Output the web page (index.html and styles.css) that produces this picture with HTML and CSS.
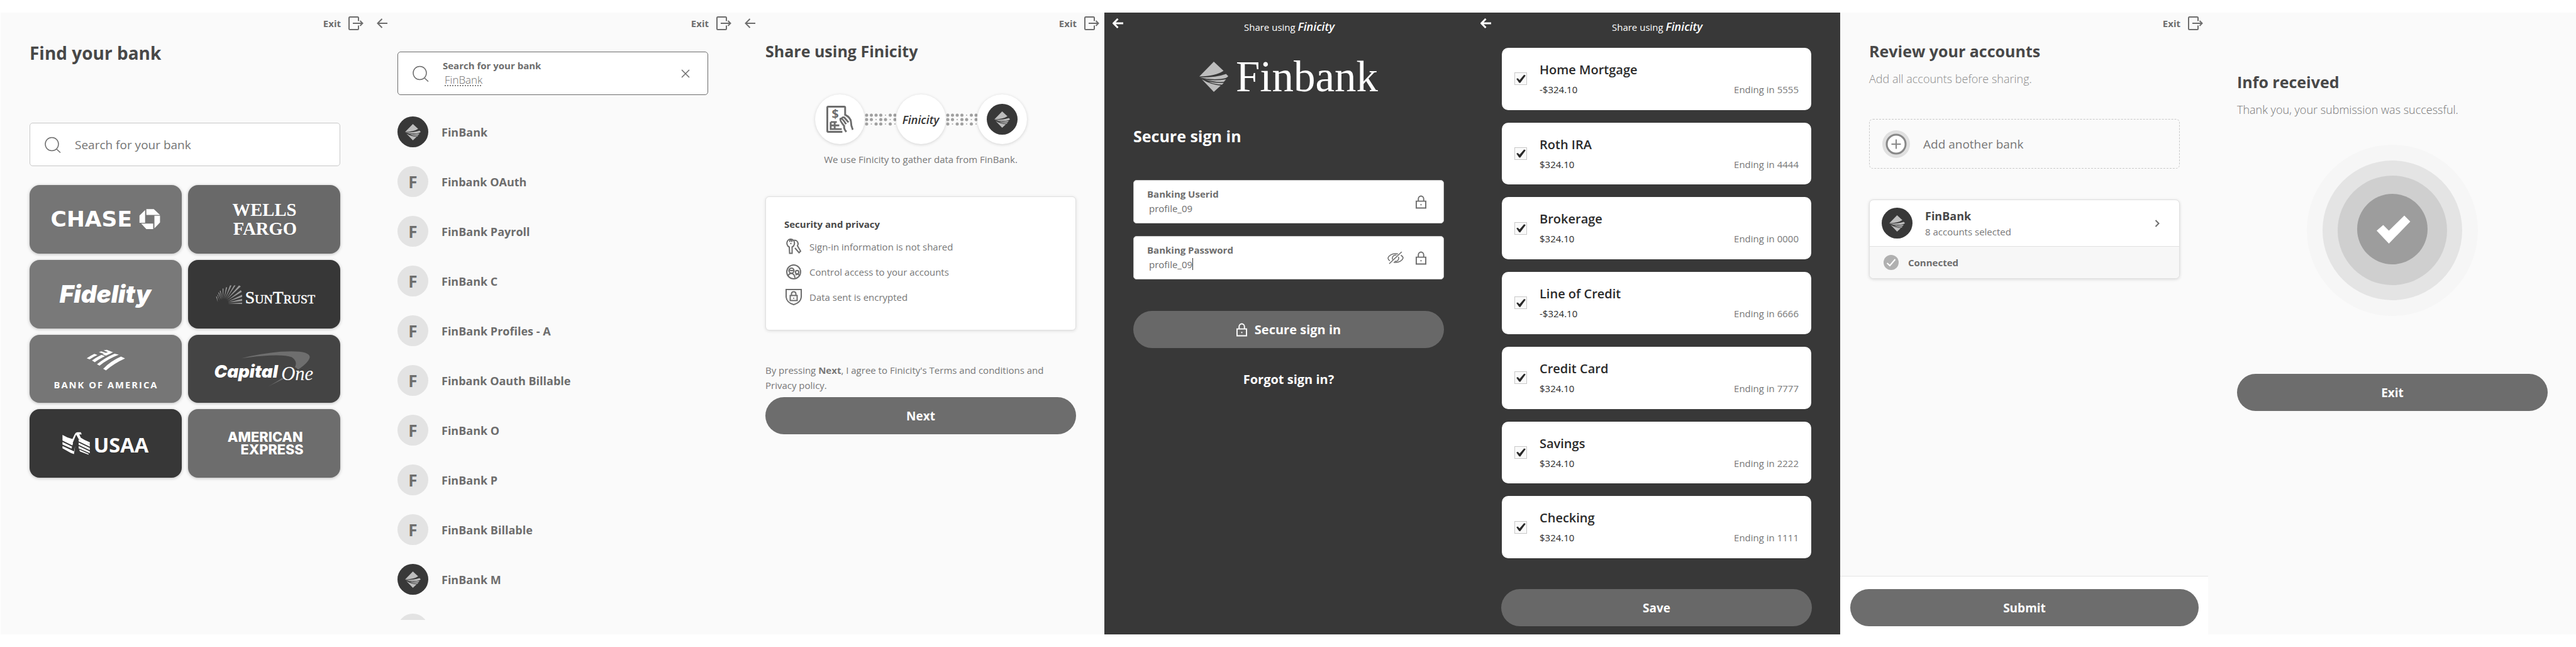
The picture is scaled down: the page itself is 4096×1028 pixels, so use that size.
FILE: index.html
```html
<!DOCTYPE html>
<html lang="en">
<head>
<meta charset="utf-8">
<title>Finicity Connect flow</title>
<link rel="stylesheet" href="styles.css">
</head>
<body>
<svg class="sprite" aria-hidden="true">
  <symbol id="i-exit" viewBox="0 0 24 22"><path d="M16 7.5v-5A1.5 1.5 0 0 0 14.500 1h-12A1.500 1.500 0 0 0 1 2.500v17A1.500 1.500 0 0 0 2.500 21h12a1.500 1.500 0 0 0 1.500-1.500v-5M7 11h15M18.500 7l4 4-4 4"/></symbol>
  <symbol id="i-back" viewBox="0 0 18 16"><path d="M17 8H1.500M8.500 1L1.500 8l7 7"/></symbol>
  <symbol id="i-search" viewBox="0 0 26 26"><circle cx="11.500" cy="12" r="10.500"/><path d="M19 20l6 5.500"/></symbol>
  <symbol id="i-close" viewBox="0 0 14 14"><path d="M1 1l12 12M13 1L1 13"/></symbol>
  <symbol id="i-lock" viewBox="0 0 18 22"><path d="M1 9.500h16v11.500H1zM4.500 9.500V6a4.500 5 0 0 1 9 0v3.500M9 14.500v2"/></symbol>
  <symbol id="i-eye" viewBox="0 0 26 20"><path d="M4 14.500C2 13 1 11 1 10c1-3.500 6-7 12-7 1.500 0 3 .2 4 .6M21.500 5.500C24 7 25 9 25 10c-1 3.500-6 7-12 7-1 0-2-.1-3-.3M8.500 12.500a5 5 0 0 1 6-7M17.500 8a5 5 0 0 1-6 7M23 0L3 19M11 11l4-3"/></symbol>
  <symbol id="i-chevron" viewBox="0 0 8 12"><path d="M1.500 1l5 5-5 5"/></symbol>
  <symbol id="i-diamond" viewBox="0 0 46 48"><path d="M23 0l15.500 14.500Q26 23 0 23.500zM1 25Q28 25 42.500 19.500L46 23Q44 26.500 34 27.500 16 29 1 25zM8 28Q24 31 42.500 28L39 32Q24 33 8 28zM14 31.500Q28 34.500 39 33.500L36 36.500Q24 36 14 31.500zM4 28Q17 36 34 38L23 48z"/></symbol>
</svg>

<main class="flow">

  <section class="screen">
    <header class="topbar"><button class="exit" type="button">Exit<svg class="exit-icon"><use href="#i-exit"/></svg></button></header>
    <div class="content">
      <h1 class="title title-large">Find your bank</h1>
      <label class="search search-empty">
        <svg class="search-icon"><use href="#i-search"/></svg>
        <input class="search-input" type="text" placeholder="Search for your bank" aria-label="Search for your bank">
      </label>
      <div class="tiles">
        <button class="tile tone-a" type="button" aria-label="Chase"><svg viewBox="0 0 245 110">
          <text class="logo-chase" x="34" y="67">CHASE</text>
          <path d="M188 38.700h12L210 48h-22zM201 49.300h9v11l-9 9.400zM179.700 62H199v9h-11zM177 49l9-8.700v20.400h-9z"/></svg></button>
        <button class="tile tone-b" type="button" aria-label="Wells Fargo"><svg viewBox="0 0 245 110">
          <text class="logo-wells" x="123" y="50">WELLS</text><text class="logo-wells" x="124" y="80">FARGO</text></svg></button>
        <button class="tile tone-c" type="button" aria-label="Fidelity"><svg viewBox="0 0 245 110">
          <text class="logo-fidelity" x="122" y="69">Fidelity</text></svg></button>
        <button class="tile tone-d" type="button" aria-label="SunTrust"><svg viewBox="0 0 245 110">
          <g class="rays"><path d="M64 70l23-1.500v2.500zM64 68.500l23-6v3.500zM64 67l23-11v3.500zM63 65.500L85 48.500l1.500 3zM62 64l20-23 3 1.500zM61 63.500l13-22.500 2.500 0zM59.500 63l8-22h2.500zM58 63l3-19h2zM56.500 63l-1-17h1.500zM55 63.500l-4-14h1.500zM53.500 64.500l-5-12h1.500zM51 66l-4-10h1zM48 68l-3-9h1.500z"/></g>
          <text class="logo-suntrust" x="92" y="70"><tspan class="caps">S</tspan>UN<tspan class="caps">T</tspan>RUST</text></svg></button>
        <button class="tile tone-e" type="button" aria-label="Bank of America"><svg viewBox="0 0 245 110">
          <path d="M118.500 54.600Q131 42 147.200 35l6.500 3Q136 46 123 57.300zM108.500 47.300Q121 37 136.800 30.300l6.900 1.700Q126 39 112.700 49.600zM100.500 41.300Q110 34 126 27.800l6 1.500Q116 36 105 44zM92 37.600Q98 33.500 104.300 30.600l5 1.700Q103 35 96.700 39.600zM119.200 25l5-1 10.300 4-4 1.500zM111.600 27.800l4-1.300 10 3.500-3.500 1.500z"/>
          <path class="tone-e-line" d="M108 28.500l16 6"/>
          <text class="logo-boa" x="123" y="86">BANK OF AMERICA</text></svg></button>
        <button class="tile tone-f" type="button" aria-label="Capital One"><svg viewBox="0 0 245 110">
          <path class="swoosh" d="M86 37.700Q118 30 149 27.200 196 24 196 36 194 45 177 56 175 53 172 52 177 43 167 36 150 29 86 37.700zM151 69.500Q142 76 128 83.500 142 77 154 71z"/>
          <text class="logo-capital" x="42" y="69">Capital</text><text class="logo-one" x="150" y="73">One</text></svg></button>
        <button class="tile tone-g" type="button" aria-label="USAA"><svg viewBox="0 0 245 110">
          <path d="M53 41.500q8 5 16 6.500l4-8q1.500-3 4.500-2.700h5l1.500 3.500h-4l2.500 5.200q6 4 14.500 7.500v3q-11-4-18-8.500l-4-7-7 17-15-7.500zM53 47l17 8-1 3.500-16-8zM53 53l15.500 7.500-1 3L53 57zM53 59.500l14.500 6.500 4 2 2-9-2 13.500-5-2L53 63zM79 48.500L97 57v3.500L79 52zM79 54l18 8.500V66l-18-8.500zM79 59.500L97 68v3l-18-8zM80 65l15 7v1.500L81 68z"/>
          <text class="logo-usaa" x="103" y="70">USAA</text></svg></button>
        <button class="tile tone-h" type="button" aria-label="American Express"><svg viewBox="0 0 245 110">
          <text class="logo-amex" x="185" y="53">AMERICAN</text><text class="logo-amex" x="186" y="73">EXPRESS</text></svg></button>
      </div>
    </div>
  </section>

  <section class="screen">
    <header class="topbar"><button class="back" type="button" aria-label="Back"><svg><use href="#i-back"/></svg></button><button class="exit" type="button">Exit<svg class="exit-icon"><use href="#i-exit"/></svg></button></header>
    <div class="content content-list">
      <div class="search search-filled">
        <svg class="search-icon"><use href="#i-search"/></svg>
        <div class="field-text">
          <label class="field-label" for="bank-query">Search for your bank</label>
          <input class="field-value misspelt" id="bank-query" type="text" value="FinBank">
        </div>
        <button class="clear" type="button" aria-label="Clear"><svg><use href="#i-close"/></svg></button>
      </div>
      <ul class="banks">
        <li class="bank"><span class="avatar avatar-dark"><svg><use href="#i-diamond"/></svg></span>FinBank</li>
        <li class="bank"><span class="avatar">F</span>Finbank OAuth</li>
        <li class="bank"><span class="avatar">F</span>FinBank Payroll</li>
        <li class="bank"><span class="avatar">F</span>FinBank C</li>
        <li class="bank"><span class="avatar">F</span>FinBank Profiles - A</li>
        <li class="bank"><span class="avatar">F</span>Finbank Oauth Billable</li>
        <li class="bank"><span class="avatar">F</span>FinBank O</li>
        <li class="bank"><span class="avatar">F</span>FinBank P</li>
        <li class="bank"><span class="avatar">F</span>FinBank Billable</li>
        <li class="bank"><span class="avatar avatar-dark"><svg><use href="#i-diamond"/></svg></span>FinBank M</li>
        <li class="bank"><span class="avatar"></span></li>
      </ul>
    </div>
  </section>

  <section class="screen">
    <header class="topbar"><button class="back" type="button" aria-label="Back"><svg><use href="#i-back"/></svg></button><button class="exit" type="button">Exit<svg class="exit-icon"><use href="#i-exit"/></svg></button></header>
    <div class="content">
      <h1 class="title">Share using Finicity</h1>
      <div class="link-row">
        <span class="disc"><svg class="pay-icon" viewBox="0 0 44 44"><path d="M26 42.500H3Q1.500 42.500 1.500 41V3Q1.500 1.500 3 1.500h26Q30.500 1.500 30.500 3v13M7 26.500h10M7 26.500V38h18M7 32h14M13.500 26.500V38M31 15q8 4 9 11 0 7 3 13M32.500 42.500Q28 37 29 33q-8-10-6-12 3-1 9 9M25 22q0-4 4-3l7 8"/><text x="14.500" y="20">$</text></svg></span>
        <svg class="dots" viewBox="0 0 50 20"><g><circle cx="3" cy="3" r="2.500"/><circle cx="10.500" cy="3" r="2.500"/><circle cx="18" cy="3" r="2.500"/><circle cx="25.500" cy="3" r="2.500"/><circle cx="33" cy="3" r="1"/><circle cx="40.500" cy="3" r="2.500"/><circle cx="48" cy="3" r="2.500"/><circle cx="3" cy="10" r="2.500"/><circle cx="10.500" cy="10" r="2.500"/><circle cx="18" cy="10" r="1"/><circle cx="25.500" cy="10" r="2.500"/><circle cx="33" cy="10" r="2.500"/><circle cx="40.500" cy="10" r="1"/><circle cx="48" cy="10" r="2.500"/><circle cx="3" cy="17" r="2.500"/><circle cx="10.500" cy="17" r="1"/><circle cx="18" cy="17" r="2.500"/><circle cx="25.500" cy="17" r="2.500"/><circle cx="33" cy="17" r="1"/><circle cx="40.500" cy="17" r="2.500"/><circle cx="48" cy="17" r="1"/></g></svg>
        <span class="disc finicity">Finicity</span>
        <svg class="dots" viewBox="0 0 50 20"><g><circle cx="3" cy="3" r="2.500"/><circle cx="10.500" cy="3" r="2.500"/><circle cx="18" cy="3" r="2.500"/><circle cx="25.500" cy="3" r="2.500"/><circle cx="33" cy="3" r="1"/><circle cx="40.500" cy="3" r="2.500"/><circle cx="48" cy="3" r="2.500"/><circle cx="3" cy="10" r="2.500"/><circle cx="10.500" cy="10" r="2.500"/><circle cx="18" cy="10" r="1"/><circle cx="25.500" cy="10" r="2.500"/><circle cx="33" cy="10" r="2.500"/><circle cx="40.500" cy="10" r="1"/><circle cx="48" cy="10" r="2.500"/><circle cx="3" cy="17" r="2.500"/><circle cx="10.500" cy="17" r="1"/><circle cx="18" cy="17" r="2.500"/><circle cx="25.500" cy="17" r="2.500"/><circle cx="33" cy="17" r="1"/><circle cx="40.500" cy="17" r="2.500"/><circle cx="48" cy="17" r="1"/></g></svg>
        <span class="disc"><span class="avatar avatar-dark"><svg><use href="#i-diamond"/></svg></span></span>
      </div>
      <p class="link-note">We use Finicity to gather data from FinBank.</p>
      <div class="privacy">
        <h2 class="privacy-title">Security and privacy</h2>
        <ul class="privacy-list">
          <li><svg viewBox="0 0 26 26"><path d="M6 13.500A6 6.500 0 1 1 10.500 13.500V23.500h-4zM8.500 7v2M7 5.500V3.500q1.500-3 3 0v2M12 3q7-1.500 8 5 0 2-1 3.500l5 8.500-2.500 2.500L15 15"/></svg>Sign-in information is not shared</li>
          <li><svg viewBox="0 0 26 26"><circle cx="13" cy="13" r="11"/><circle cx="9.500" cy="11" r="4"/><path d="M5.500 10q5 2 8 0M4 20q1-4.500 5.500-4.500T15 22.500M16 18q4-3 6.500 1"/><circle cx="18.500" cy="13.500" r="2.700"/></svg>Control access to your accounts</li>
          <li><svg viewBox="0 0 26 26"><path d="M1 1h24v12q-1 9-12 12Q2 22 1 13zM7.500 10.500h11v8h-11zM9.500 10.500V8q0-3.500 3.500-3.500T16.500 8v2.500M13 14v1.500"/></svg>Data sent is encrypted</li>
        </ul>
      </div>
      <p class="agreement">By pressing <strong>Next</strong>, I agree to Finicity's Terms and conditions and Privacy policy.</p>
      <button class="pill pill-next" type="button">Next</button>
    </div>
  </section>

  <section class="screen dark">
    <header class="topbar"><button class="back" type="button" aria-label="Back"><svg><use href="#i-back"/></svg></button><p class="brandline">Share using <span class="finicity">Finicity</span></p></header>
    <div class="content">
      <div class="finbank"><svg><use href="#i-diamond"/></svg><span>Finbank</span></div>
      <h1 class="title title-small">Secure sign in</h1>
      <div class="fields">
        <div class="field">
          <div class="field-text">
            <label class="field-label" for="userid">Banking Userid</label>
            <input class="field-value" id="userid" type="text" value="profile_09">
          </div>
          <svg class="lock"><use href="#i-lock"/></svg>
        </div>
        <div class="field">
          <div class="field-text">
            <label class="field-label" for="password">Banking Password</label>
            <div class="caret-row"><input class="field-value sized" id="password" type="text" value="profile_09"><span class="caret"></span></div>
          </div>
          <svg class="eye"><use href="#i-eye"/></svg>
          <svg class="lock"><use href="#i-lock"/></svg>
        </div>
      </div>
      <button class="pill pill-signin" type="button"><svg class="lock"><use href="#i-lock"/></svg>Secure sign in</button>
      <a class="forgot" href="#">Forgot sign in?</a>
    </div>
  </section>

  <section class="screen dark">
    <header class="topbar"><button class="back" type="button" aria-label="Back"><svg><use href="#i-back"/></svg></button><p class="brandline">Share using <span class="finicity">Finicity</span></p></header>
    <div class="content">
      <div class="accounts">
        <label class="account"><input type="checkbox" checked><span class="account-text"><b>Home Mortgage</b><span class="account-line"><span>-$324.10</span><span class="ending">Ending in 5555</span></span></span></label>
        <label class="account"><input type="checkbox" checked><span class="account-text"><b>Roth IRA</b><span class="account-line"><span>$324.10</span><span class="ending">Ending in 4444</span></span></span></label>
        <label class="account"><input type="checkbox" checked><span class="account-text"><b>Brokerage</b><span class="account-line"><span>$324.10</span><span class="ending">Ending in 0000</span></span></span></label>
        <label class="account"><input type="checkbox" checked><span class="account-text"><b>Line of Credit</b><span class="account-line"><span>-$324.10</span><span class="ending">Ending in 6666</span></span></span></label>
        <label class="account"><input type="checkbox" checked><span class="account-text"><b>Credit Card</b><span class="account-line"><span>$324.10</span><span class="ending">Ending in 7777</span></span></span></label>
        <label class="account"><input type="checkbox" checked><span class="account-text"><b>Savings</b><span class="account-line"><span>$324.10</span><span class="ending">Ending in 2222</span></span></span></label>
        <label class="account"><input type="checkbox" checked><span class="account-text"><b>Checking</b><span class="account-line"><span>$324.10</span><span class="ending">Ending in 1111</span></span></span></label>
      </div>
      <button class="pill pill-save" type="button">Save</button>
    </div>
  </section>

  <section class="screen">
    <header class="topbar"><button class="exit" type="button">Exit<svg class="exit-icon"><use href="#i-exit"/></svg></button></header>
    <div class="content content-grow">
      <h1 class="title">Review your accounts</h1>
      <p class="lead">Add all accounts before sharing.</p>
      <button class="add-bank" type="button"><svg viewBox="0 0 44 44"><circle class="halo" cx="22" cy="22" r="22"/><circle class="ring" cx="22" cy="22" r="15"/><path d="M22 14.500v15M14.500 22h15"/></svg>Add another bank</button>
      <article class="linked">
        <div class="linked-main">
          <span class="avatar avatar-dark"><svg><use href="#i-diamond"/></svg></span>
          <div class="linked-text"><h2>FinBank</h2><p>8 accounts selected</p></div>
          <svg class="chevron"><use href="#i-chevron"/></svg>
        </div>
        <div class="linked-status"><svg viewBox="0 0 24 24"><circle cx="12" cy="12" r="12"/><path d="M5.500 13l4.500 4L18.500 7"/></svg>Connected</div>
      </article>
    </div>
    <footer class="submit-bar"><button class="pill" type="button">Submit</button></footer>
  </section>

  <section class="screen">
    <div class="content content-done">
      <h1 class="title">Info received</h1>
      <p class="lead lead-done">Thank you, your submission was successful.</p>
      <svg class="success" viewBox="-136 -136 272 272"><circle class="s1" r="136"/><circle class="s2" r="111"/><circle class="s3" r="87"/><circle class="s4" cy="-2" r="56"/><path d="M19 -23.500L28.500 -14 -5.500 21 -25 .5 -14.500 -8.500 -5.500 .5z"/></svg>
      <button class="pill pill-exit" type="button">Exit</button>
    </div>
  </section>

</main>
</body>
</html>
```

FILE: styles.css
```css
* { box-sizing: border-box; }

body {
  margin: 0;
  background: #fff;
  color: #6d6d6d;
  font: 400 15px/24px "Open Sans", "Noto Sans", sans-serif;
}

h1, h2, p, ul { margin: 0; padding: 0; }
ul { list-style: none; }
button, input { font: inherit; color: inherit; }
button { border: 0; background: none; padding: 0; cursor: pointer; }
svg { display: block; flex: none; fill: none; stroke: currentColor; stroke-width: 2; }
a { color: inherit; text-decoration: none; }

.sprite { position: absolute; width: 0; height: 0; }

.flow {
  display: grid;
  grid-template-columns: repeat(7, minmax(0, 1fr));
  padding: 20px 0 20px 1px;
}

.screen {
  display: flex;
  flex-direction: column;
  min-height: 988px;
  background: #fafafa;
}
.dark { background: #383838; color: #fff; }

.topbar {
  display: flex;
  align-items: center;
  height: 34px;
  padding: 0 8px 0 13px;
}
.exit {
  display: flex;
  align-items: center;
  gap: 12px;
  margin-left: auto;
  font-weight: 700;
}
.exit-icon { width: 24px; height: 22px; }
.back svg { width: 18px; height: 16px; }
.dark .back svg { stroke-width: 3; }
.brandline {
  flex: 1;
  padding: 10px 20px 0 0;
  text-align: center;
}
.finicity { font-size: 18px; font-style: italic; font-weight: 600; }

.content { padding: 0 45px 0 46px; }
.content-grow { flex: 1; }
.content-list {
  display: flex;
  flex-direction: column;
  flex: 1;
}

.title {
  margin-top: 9px;
  color: #484848;
  font-size: 25px;
  font-weight: 700;
  line-height: 36px;
}
.title-large { margin-top: 12px; font-size: 28px; }
.dark .title { color: #fff; }

/* Search boxes */
.search {
  display: flex;
  align-items: center;
  height: 69px;
  padding: 0 28px 0 23px;
  border: 1px solid #c8c8c8;
  border-radius: 5px;
  background: #fff;
  gap: 22px;
}
.search-empty { margin-top: 93px; }
.search-filled { margin-top: 28px; border-color: #6b6b6b; }
.search-icon { width: 26px; height: 26px; stroke-width: 1.500; }
.search-input {
  flex: 1;
  min-width: 0;
  border: 0;
  padding: 0;
  outline: 0;
  background: none;
  font-size: 19px;
}
.search-input::placeholder { color: #757575; opacity: 1; }
.clear svg { width: 14px; height: 14px; stroke-width: 1.500; }

.field-text { flex: 1; min-width: 0; margin-bottom: 4px; }
.field-label { display: block; font-weight: 700; font-size: 15px; }
.field-value {
  display: block;
  width: 100%;
  height: 22px;
  border: 0;
  padding: 0 0 0 3px;
  outline: 0;
  background: none;
  font-size: 15px;
}
.misspelt {
  font-size: 17px;
  font-weight: 300;
  text-decoration: underline dotted;
  text-underline-offset: 3px;
}

/* Bank tiles */
.tiles {
  display: grid;
  grid-template-columns: 1fr 1fr;
  grid-auto-rows: 1fr;
  gap: 10px;
  min-height: 465px;
  margin-top: 30px;
}
.tile {
  border-radius: 16px;
  color: #fff;
  box-shadow: 0 1px 5px rgba(0, 0, 0, .25);
}
.tile svg { width: 100%; fill: #fff; stroke: none; }
.tone-a { background: #757575; }
.tone-b { background: #696969; }
.tone-c { background: #797979; }
.tone-d { background: #373737; }
.tone-e { background: #767676; }
.tone-f { background: #444; }
.tone-g { background: #373737; }
.tone-h { background: #6d6d6d; }
.tile .tone-e-line { stroke: #767676; stroke-width: 1.500; }
.tile .rays { fill: #999; }
.tile .swoosh { fill: #6e6e6e; }
.logo-chase { font: 700 35px "DejaVu Sans", sans-serif; }
.logo-wells { font: 700 29px "Liberation Serif", serif; text-anchor: middle; }
.logo-fidelity { font: italic 900 39px "Inter", sans-serif; text-anchor: middle; }
.logo-suntrust { font: 400 20px "Liberation Serif", serif; stroke: #fff; stroke-width: 0.500; }
.logo-suntrust .caps { font-size: 28px; }
.logo-boa { font: 700 15px "Open Sans", sans-serif; text-anchor: middle; letter-spacing: 2px; }
.logo-capital { font: italic 900 28px "Inter", sans-serif; }
.logo-one { font: italic 400 31px "Liberation Serif", serif; }
.logo-usaa { font: 700 33px "Open Sans", sans-serif; }
.logo-amex { font: 800 22px "Inter", sans-serif; text-anchor: end; }

/* Bank results */
.banks {
  display: flex;
  flex: 1 1 0;
  flex-direction: column;
  gap: 30px;
  height: 0;
  margin: 34px 0 23px;
  overflow: hidden;
}
.bank {
  display: flex;
  align-items: center;
  gap: 21px;
  font-size: 18px;
  font-weight: 700;
}
.avatar {
  display: flex;
  align-items: center;
  justify-content: center;
  flex: none;
  width: 49px;
  height: 49px;
  border-radius: 50%;
  background: #e3e3e3;
  font-size: 26px;
}
.avatar-dark { background: #383838; color: #bdbdbd; }
.avatar svg { width: 25px; height: 26px; fill: currentColor; stroke: none; }

/* Consent */
.link-row {
  display: flex;
  align-items: center;
  justify-content: center;
  margin-top: 51px;
}
.disc {
  display: flex;
  align-items: center;
  justify-content: center;
  width: 79px;
  height: 79px;
  border-radius: 50%;
  background: #fff;
  box-shadow: 0 1px 5px rgba(0, 0, 0, .16);
}
.disc.finicity { color: #333; }
.pay-icon { width: 43px; height: 43px; stroke-width: 3; }
.pay-icon text { fill: currentColor; stroke: none; font: 700 20px "Open Sans", sans-serif; text-anchor: middle; }
.dots { width: 50px; height: 24px; fill: #a0a0a0; stroke: none; }
.link-note { margin-top: 12px; text-align: center; color: #777; }
.privacy {
  margin-top: 47px;
  padding: 31px 29px 40px;
  border: 1px solid #e0e0e0;
  border-radius: 6px;
  background: #fff;
  box-shadow: 0 1px 5px rgba(0, 0, 0, .12);
}
.privacy-title { color: #484848; font-size: 15px; line-height: 24px; }
.privacy-list { display: grid; gap: 16px; margin-top: 12px; color: #777; }
.privacy-list li { display: flex; align-items: center; gap: 12px; }
.privacy-list svg { width: 26px; height: 26px; margin: -1px 0 -1px 2px; color: #6d6d6d; }
.agreement { margin-top: 51px; color: #777; }

/* Pills */
.pill {
  display: flex;
  align-items: center;
  justify-content: center;
  gap: 12px;
  width: 100%;
  height: 59px;
  border-radius: 30px;
  background: #6d6d6d;
  color: #fff;
  font-size: 19px;
  font-weight: 700;
}
.dark .pill { background: #686868; }
.pill-next { margin-top: 7px; }
.dark .pill-signin { margin-top: 50px; font-size: 20px; }
.pill-save { margin-top: 49px; }
.pill-exit { margin-top: 92px; }

/* Sign in */
.finbank {
  display: flex;
  align-items: center;
  justify-content: center;
  gap: 12px;
  height: 50px;
  margin-top: 43px;
  font: 400 69px/50px "Liberation Serif", serif;
}
.finbank svg { width: 46px; height: 48px; color: #bdbdbd; fill: currentColor; stroke: none; }
.title-small { margin-top: 51px; }
.fields { display: grid; gap: 20px; margin-top: 52px; }
.field {
  display: flex;
  align-items: center;
  gap: 19px;
  height: 69px;
  padding: 0 27px 0 21px;
  border: 1px solid #c8c8c8;
  border-radius: 5px;
  background: #fff;
  color: #6d6d6d;
}
.lock { width: 17px; height: 22px; }
.eye { width: 26px; height: 20px; stroke-width: 1.500; }
.caret-row { display: flex; align-items: center; }
.sized { width: auto; field-sizing: content; }
.caret { width: 1px; height: 19px; background: #333; }
.forgot {
  display: block;
  margin-top: 38px;
  text-align: center;
  font-size: 20px;
  font-weight: 700;
}

/* Accounts */
.accounts {
  display: grid;
  grid-auto-rows: 1fr;
  gap: 20px;
  min-height: 811px;
  margin-top: 22px;
  padding: 0 1px;
}
.account {
  display: flex;
  gap: 20px;
  padding: 0 20px;
  border-radius: 10px;
  background: #fff;
  color: #2a2a2a;
}
.account input {
  appearance: none;
  align-self: center;
  flex: none;
  width: 20px;
  height: 20px;
  margin: 0;
  border: 1px solid #c8c8c8;
  background: #fafafa;
}
.account input:checked::before {
  content: "";
  display: block;
  height: 18px;
  background: #2a2a2a;
  clip-path: polygon(12% 50%, 24% 44%, 40% 60%, 80% 14%, 94% 20%, 46% 86%, 36% 84%);
}
.account-text { display: flex; flex: 1; flex-direction: column; gap: 8px; padding-top: 23px; }
.account b { font-size: 20px; font-weight: 600; }
.account-line { display: flex; justify-content: space-between; line-height: 22px; }
.ending { color: #777; }

/* Review */
.lead { margin-top: 13px; color: #8a8a8a; font-size: 18px; font-weight: 300; line-height: 26px; }
.add-bank {
  display: flex;
  align-items: center;
  gap: 21px;
  width: 100%;
  height: 79px;
  margin-top: 51px;
  padding: 0 20px;
  border: 1px dashed #c8c8c8;
  border-radius: 6px;
  font-size: 19px;
  color: #777;
}
.add-bank svg { width: 44px; height: 44px; color: #888; }
.halo { fill: #e0e0e0; stroke: none; }
.ring { fill: #fff; stroke-width: 3; }
.linked {
  margin-top: 49px;
  border: 1px solid #e0e0e0;
  border-radius: 7px;
  background: #fff;
  overflow: hidden;
  box-shadow: 0 1px 5px rgba(0, 0, 0, .14);
}
.linked-main { display: flex; align-items: center; gap: 20px; height: 73px; padding: 0 31px 0 19px; }
.linked-text { flex: 1; }
.linked-text h2 { color: #484848; font-size: 18px; font-weight: 700; line-height: 26px; }
.linked-text p { color: #777; }
.chevron { width: 8px; height: 12px; }
.linked-status {
  display: flex;
  align-items: center;
  gap: 15px;
  height: 51px;
  padding: 0 22px;
  border-top: 1px solid #e0e0e0;
  background: #f7f7f7;
  font-size: 15px;
  font-weight: 700;
}
.linked-status svg { width: 24px; height: 24px; fill: #b0b0b0; stroke: none; }
.linked-status path { fill: none; stroke: #fff; }
.submit-bar {
  padding: 20px 15px 13px 16px;
  border-top: 1px solid #e4e4e4;
  background: #fff;
}

/* Done */
.content-done { padding-top: 83px; }
.lead-done { font-size: 18px; color: #777; }
.success { width: 272px; height: 272px; margin: 43px auto 0; stroke: none; }
.s1 { fill: #f6f6f6; }
.s2 { fill: #e4e4e4; }
.s3 { fill: #cfcfcf; }
.s4 { fill: #9d9d9d; }
.success path { fill: #fff; }
```
